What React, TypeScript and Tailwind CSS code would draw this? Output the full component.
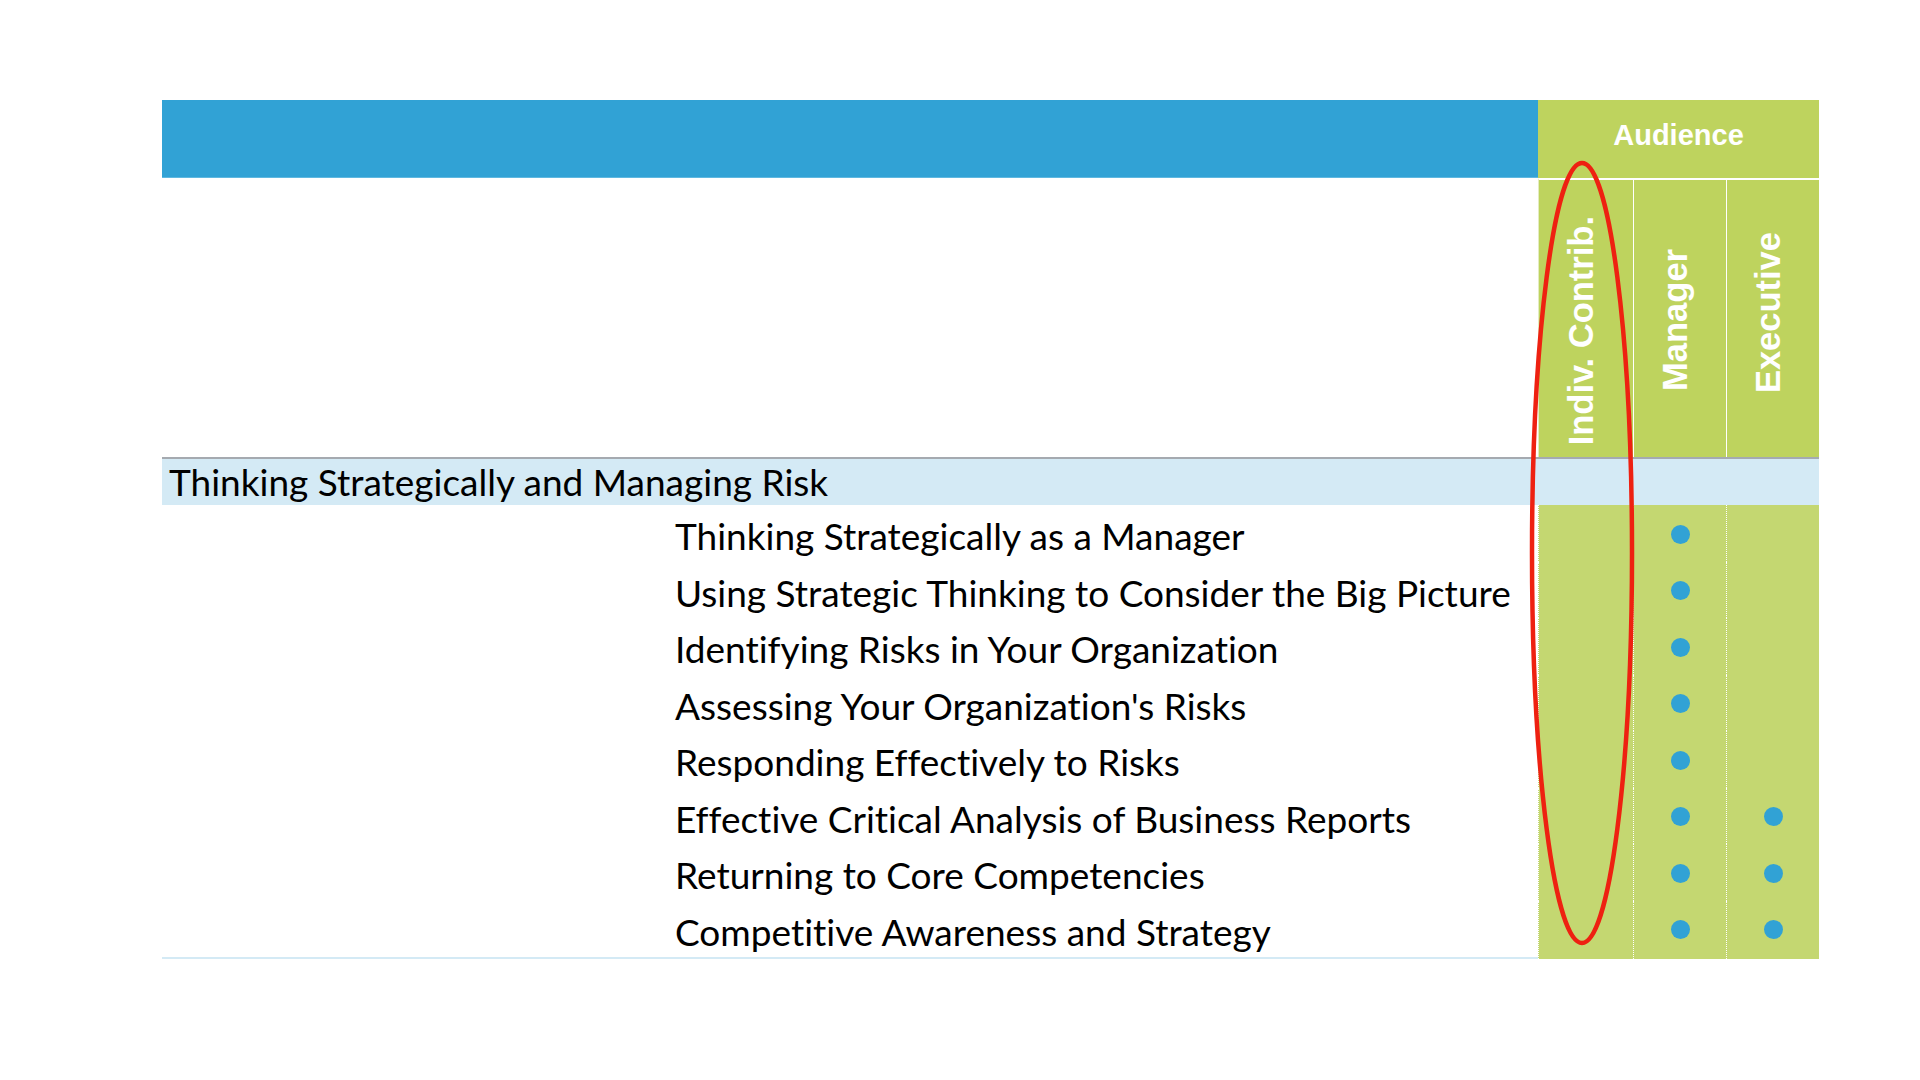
const items = [
  { title: "Thinking Strategically as a Manager", ic: false, mgr: true, exec: false },
  { title: "Using Strategic Thinking to Consider the Big Picture", ic: false, mgr: true, exec: false },
  { title: "Identifying Risks in Your Organization", ic: false, mgr: true, exec: false },
  { title: "Assessing Your Organization's Risks", ic: false, mgr: true, exec: false },
  { title: "Responding Effectively to Risks", ic: false, mgr: true, exec: false },
  { title: "Effective Critical Analysis of Business Reports", ic: false, mgr: true, exec: true },
  { title: "Returning to Core Competencies", ic: false, mgr: true, exec: true },
  { title: "Competitive Awareness and Strategy", ic: false, mgr: true, exec: true },
];

const headers = [
  { label: "Indiv. Contrib.", cls: "pt-[24px] border-l-[#e4ecc0]" },
  { label: "Manager", cls: "pt-[2px] border-l-white" },
  { label: "Executive", cls: "pb-[12px] border-l-white" },
];

const Dot = ({ on }: { on: boolean }) =>
  on ? <span className="block w-[19px] h-[19px] rounded-full bg-[#31a2d5]" /> : null;

const App = () => {
  return (
    <div className="w-[1920px] h-[1080px] bg-white pt-[100px] pl-[162px]">
      <div className="relative w-[1657px]">
        {/* top band */}
        <div className="grid grid-cols-[1376px_281px] h-[78px]">
          <div className="bg-[#31a2d5] border-b border-[#5fb8e0]" />
          <div className="bg-[#bed35e] flex items-center justify-center text-white font-bold text-[29px] font-['Liberation_Sans',Arial,sans-serif] pb-[6px]">
            Audience
          </div>
        </div>

        {/* column headers */}
        <div className="grid grid-cols-[1376px_95px_93px_93px] h-[281px] border-b-2 border-[#a5aab0]">
          <div className="bg-white" />
          {headers.map((h) => (
            <div
              key={h.label}
              className={"bg-[#bed35e] border-t-2 border-t-white border-l flex items-center justify-center pr-[10px] " + h.cls}
            >
              <span className="[writing-mode:vertical-rl] rotate-180 whitespace-nowrap text-white font-bold text-[34.5px] leading-none font-['Liberation_Sans',Arial,sans-serif]">
                {h.label}
              </span>
            </div>
          ))}
        </div>

        {/* section row */}
        <div className="h-[46px] bg-[#d4eaf5] flex items-center pl-[7px] text-black text-[37px] whitespace-nowrap [font-variant-ligatures:none] font-['Lato',sans-serif]">
          Thinking Strategically and Managing Risk
        </div>

        {/* items */}
        <div className="border-b-2 border-[#d4eaf5]">
          {items.map((it) => (
            <div key={it.title} className="grid grid-cols-[1376px_95px_93px_93px] h-[56.5px]">
              <div className="flex items-center pl-[513px] pt-[3px] text-black text-[37px] whitespace-nowrap [font-variant-ligatures:none] font-['Lato',sans-serif]">
                {it.title}
              </div>
              <div className="bg-[#c4d771] border-l border-dotted border-l-white flex items-center justify-center">
                <Dot on={it.ic} />
              </div>
              <div className="bg-[#c4d771] border-l border-dotted border-l-white flex items-center justify-center">
                <Dot on={it.mgr} />
              </div>
              <div className="bg-[#c4d771] border-l border-dotted border-l-white flex items-center justify-center">
                <Dot on={it.exec} />
              </div>
            </div>
          ))}
        </div>

        {/* red highlight around Indiv. Contrib. column */}
        <svg
          className="absolute left-[1366px] top-[58px] pointer-events-none"
          width="110"
          height="790"
          viewBox="0 0 110 790"
        >
          <ellipse cx="54" cy="395" rx="50" ry="390" fill="none" stroke="#ee2111" strokeWidth="4.5" />
        </svg>
      </div>
    </div>
  );
};

export default App;
